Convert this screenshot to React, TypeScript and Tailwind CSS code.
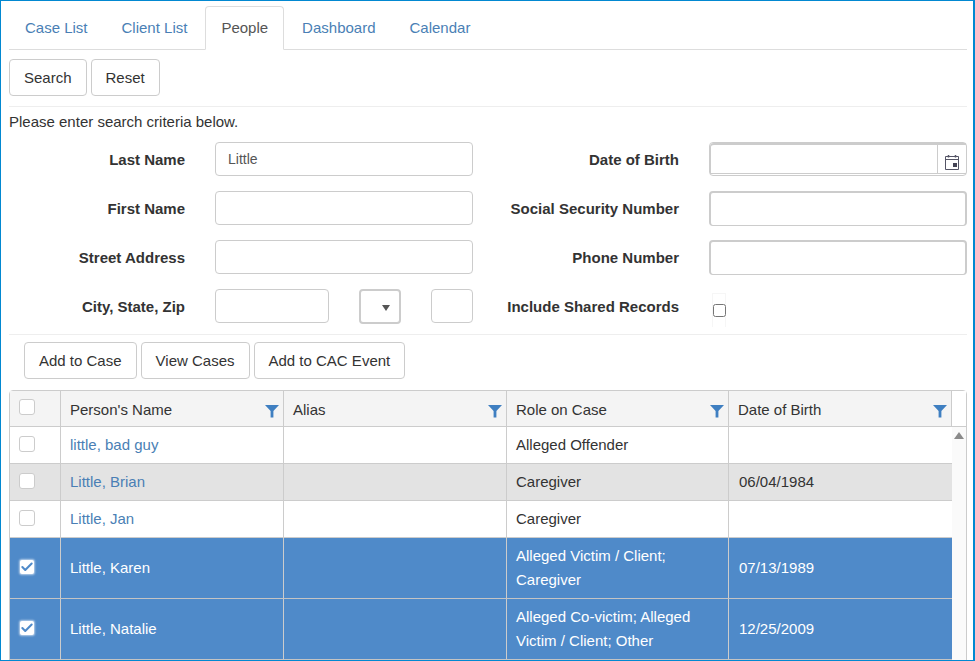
import React from 'react';
import { Check } from 'lucide-react';

const tabs = ['Case List', 'Client List', 'People', 'Dashboard', 'Calendar'];

const rows = [
  { name: 'little, bad guy', role: ['Alleged Offender'], dob: '' },
  { name: 'Little, Brian', role: ['Caregiver'], dob: '06/04/1984', alt: true },
  { name: 'Little, Jan', role: ['Caregiver'], dob: '' },
  { name: 'Little, Karen', role: ['Alleged Victim / Client;', 'Caregiver'], dob: '07/13/1989', selected: true },
  { name: 'Little, Natalie', role: ['Alleged Co-victim; Alleged', 'Victim / Client; Other'], dob: '12/25/2009', selected: true },
];

const Btn = ({ children }: { children: React.ReactNode }) => (
  <button className="h-[37px] px-[14px] pt-px bg-white border border-[#cccccc] rounded-[4px] text-[15px] text-[#333333]">
    {children}
  </button>
);

const Label = ({ children, width }: { children: React.ReactNode; width: string }) => (
  <label className={`${width} shrink-0 pt-[2px] text-right font-bold text-[15px] text-[#333333]`}>{children}</label>
);

const TextInput = ({ value, className }: { value?: string; className?: string }) => (
  <input
    readOnly
    value={value || ''}
    className={`h-[34px] px-3 bg-white border border-[#cccccc] rounded-[4px] text-[14px] text-[#555555] ${className || ''}`}
  />
);

const ThickInput = () => (
  <div className="w-[258px] h-[35px] bg-white border-2 border-b border-[#cccccc] rounded-[4px]" />
);

const Filter = () => (
  <svg width="14" height="14" viewBox="0 0 14 14" className="absolute right-[4px] bottom-[8px]">
    <path d="M0 1h14L8.4 7v6.5H5.6V7z" fill="#3f7fc1" />
  </svg>
);

const TableCheck = ({ checked }: { checked?: boolean }) =>
  checked ? (
    <div className="w-[14px] h-[14px] ml-px bg-white rounded-[2px] flex items-center justify-center shadow-[0_0_2px_1px_rgba(255,255,255,0.6)]">
      <Check size={14} strokeWidth={3.5} className="text-[#4f8ac9]" />
    </div>
  ) : (
    <div className="w-4 h-4 bg-white border border-[#cccccc] rounded-[3px]" />
  );

export default function App() {
  return (
    <div className="h-[661px] w-[975px] overflow-hidden bg-white border-t border-l border-r-2 border-b border-[#0288d1] pl-2 pr-[6px] pt-[5px] font-['Liberation_Sans',Arial,sans-serif] text-[#333333]">
      {/* tabs */}
      <div className="flex h-[44px] border-b border-[#dddddd]">
        {tabs.map(tab =>
          tab === 'People' ? (
            <div key={tab} className="h-[44px] px-[15px] pt-px mr-[2px] flex items-center bg-white border border-[#dddddd] border-b-white rounded-t-[4px] text-[15px] text-[#555555]">
              {tab}
            </div>
          ) : (
            <div key={tab} className="h-[43px] px-4 pt-[2px] mr-[2px] flex items-center text-[15px] text-[#4a7fb5]">
              {tab}
            </div>
          )
        )}
      </div>

      <div className="flex gap-1 mt-[9px]">
        <Btn>Search</Btn>
        <Btn>Reset</Btn>
      </div>
      <div className="mt-[10px] border-t border-[#eeeeee]" />
      <p className="mt-[5px] mb-[10px] h-5 leading-5 text-[15px]">Please enter search criteria below.</p>

      {/* search form */}
      <div className="flex flex-col gap-[15px]">
        <div className="flex items-center h-[34px]">
          <Label width="w-[176px]">Last Name</Label>
          <TextInput value="Little" className="ml-[30px] w-[258px]" />
          <Label width="w-[206px]">Date of Birth</Label>
          <div className="ml-[30px] w-[258px] h-[34px] flex bg-white border border-[#cccccc] rounded-[4px]">
            <div className="flex-1 h-[31px] border-b border-t-2 border-l border-[#cccccc] rounded-tl-[4px]" />
            <div className="w-[29px] h-[31px] border-l border-t-2 border-[#cccccc] border-b flex items-center justify-center">
              <svg width="15" height="16" viewBox="0 0 15 16" fill="none" className="mt-[5px] ml-px">
                <path d="M.5 2.5h13v13H.5z" stroke="#555566" />
                <path d="M1 5.5h12" stroke="#555566" />
                <path d="M3.5 1v2.5M10.5 1v2.5" stroke="#555566" strokeWidth="1.5" />
                <rect x="8" y="9" width="4" height="4" fill="#444455" />
              </svg>
            </div>
          </div>
        </div>

        <div className="flex items-center h-[34px]">
          <Label width="w-[176px]">First Name</Label>
          <TextInput className="ml-[30px] w-[258px]" />
          <Label width="w-[206px]">Social Security Number</Label>
          <div className="ml-[30px]"><ThickInput /></div>
        </div>

        <div className="flex items-center h-[34px]">
          <Label width="w-[176px]">Street Address</Label>
          <TextInput className="ml-[30px] w-[258px]" />
          <Label width="w-[206px]">Phone Number</Label>
          <div className="ml-[30px]"><ThickInput /></div>
        </div>

        <div className="flex items-start h-[34px]">
          <div className="h-[34px] flex items-center"><Label width="w-[176px]">City, State, Zip</Label></div>
          <TextInput className="ml-[30px] w-[114px]" />
          <div className="ml-[30px] w-[42px] h-[35px] bg-white border-2 border-[#cccccc] rounded-[4px] flex items-center justify-end pr-[9px]">
            <svg width="8" height="6" viewBox="0 0 8 6" className="mt-[3px]">
              <path d="M0 0h8L4 6z" fill="#555555" />
            </svg>
          </div>
          <TextInput className="ml-[30px] w-[42px]" />
          <div className="h-[34px] flex items-center"><Label width="w-[206px]">Include Shared Records</Label></div>
          <div className="ml-[33px] w-[14px] h-[34px] mt-[4px] border-t border-x border-[#f6f6f6] flex justify-center pt-[10px]">
            <input type="checkbox" readOnly className="w-[13px] h-[13px] m-0" />
          </div>
        </div>
      </div>

      <div className="mt-[11px] border-t border-[#eeeeee]" />

      <div className="flex gap-1 mt-[7px] ml-[15px]">
        <Btn>Add to Case</Btn>
        <Btn>View Cases</Btn>
        <Btn>Add to CAC Event</Btn>
      </div>

      {/* results grid */}
      <div className="mt-[11px] border border-[#cccccc] rounded-t-[4px] text-[15px]">
        <div className="flex h-9 border-b border-[#cccccc]">
          <div className="flex-1 flex bg-[#f4f4f4]">
            <div className="w-[51px] border-r border-[#cccccc] pl-[9px] pt-2"><TableCheck /></div>
            <div className="relative w-[223px] border-r border-[#cccccc] pl-[9px] pt-[4px] flex items-center">Person's Name<Filter /></div>
            <div className="relative w-[223px] border-r border-[#cccccc] pl-[9px] pt-[4px] flex items-center">Alias<Filter /></div>
            <div className="relative w-[222px] border-r border-[#cccccc] pl-[9px] pt-[4px] flex items-center">Role on Case<Filter /></div>
            <div className="relative w-[223px] border-r border-[#cccccc] pl-[9px] pt-[4px] flex items-center">Date of Birth<Filter /></div>
          </div>
          <div className="w-[14px] bg-white" />
        </div>

        <div className="flex">
          <div className="flex-1">
            {rows.map(row => (
              <div
                key={row.name}
                className={`flex border-b ${row.selected ? 'h-[61px] bg-[#4f8ac9] text-white border-[#c4c4c4]' : 'h-[37px] border-[#cccccc]'} ${row.alt ? 'bg-[#e3e3e3]' : ''}`}
              >
                <div className="w-[51px] border-r border-[#cccccc] pl-[9px] pb-[2px] flex items-center">
                  <TableCheck checked={row.selected} />
                </div>
                <div className={`w-[223px] border-r border-[#cccccc] pl-[9px] flex items-center ${row.selected ? '' : 'text-[#4a7fb5]'}`}>
                  {row.name}
                </div>
                <div className="w-[223px] border-r border-[#cccccc]" />
                <div className="w-[222px] border-r border-[#cccccc] pl-[9px] flex flex-col justify-center leading-6">
                  {row.role.map(line => <span key={line}>{line}</span>)}
                </div>
                <div className="w-[222px] pl-[10px] flex items-center">{row.dob}</div>
              </div>
            ))}
          </div>
          <div className="w-[14px] bg-[#fafafa] flex justify-start pl-[2px] pt-[5px]">
            <svg width="10" height="7" viewBox="0 0 10 7" className="shrink-0">
              <path d="M5 0l5 7H0z" fill="#8a8a8a" />
            </svg>
          </div>
        </div>
      </div>
    </div>
  );
}
